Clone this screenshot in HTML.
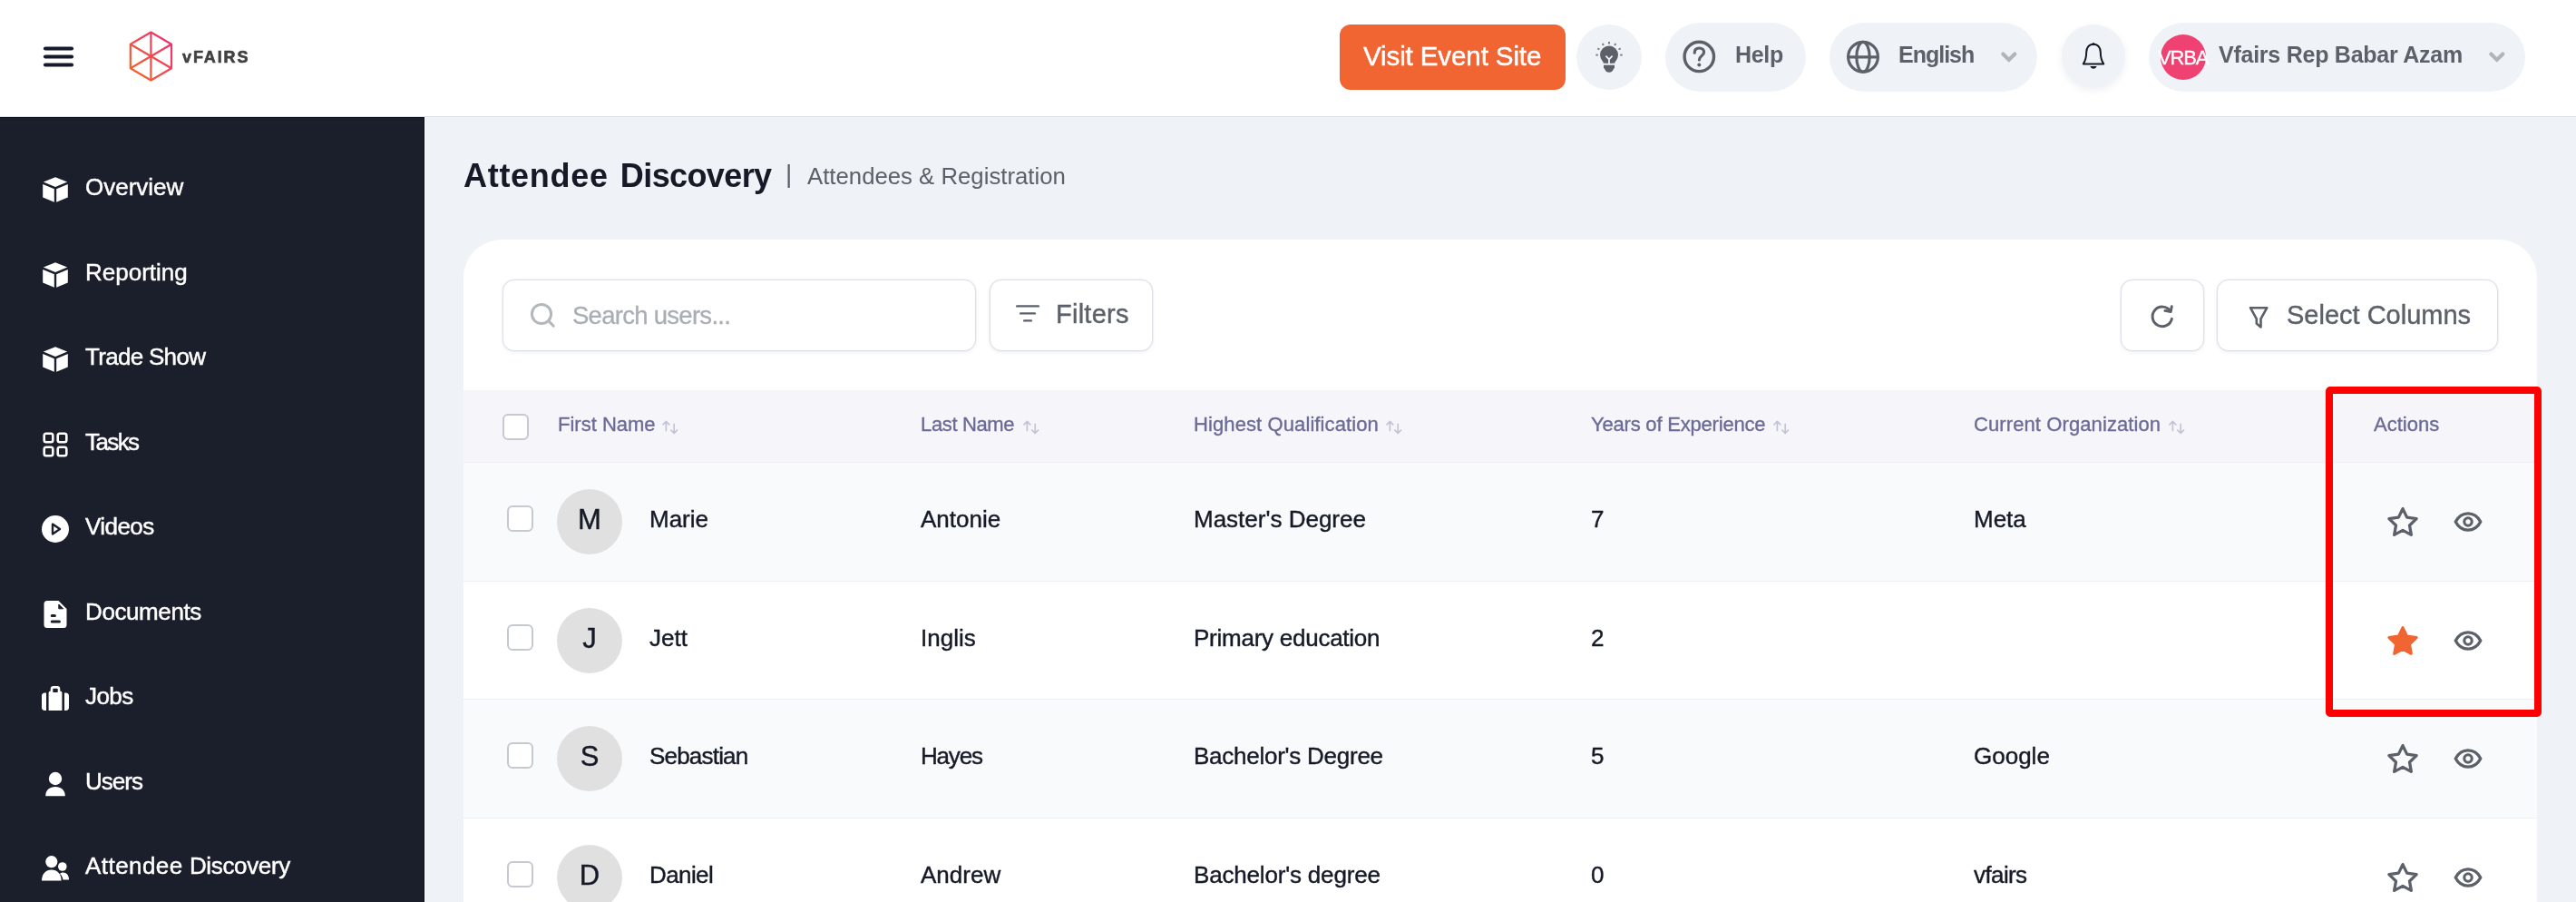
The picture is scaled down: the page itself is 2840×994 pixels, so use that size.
<!DOCTYPE html>
<html lang="en">
<head>
<meta charset="utf-8">
<title>Attendee Discovery</title>
<style>
*{box-sizing:border-box;margin:0;padding:0}
html,body{width:2840px;height:994px;overflow:hidden;background:#eff2f7}
body{position:relative;font-family:"Liberation Sans",sans-serif;color:#161a27}
.abs{position:absolute}
.t,.nav,.th,.td,.av{will-change:transform}
.t{position:absolute;white-space:nowrap;line-height:1}
/* header */
#header{position:absolute;left:0;top:0;width:2840px;height:129px;background:#fff;border-bottom:1px solid #dde1e7}
.pill{position:absolute;background:#eff2f7;border-radius:40px}
.hd{color:#5b6069;font-weight:bold;font-size:25px}
/* sidebar */
#sidebar{position:absolute;left:0;top:129px;width:468px;height:865px;background:#1b1e2b;box-shadow:inset -1px 0 0 #0f121e,inset 0 1px 0 #10131f,1px 0 0 #fbfcfe}
.nav{position:absolute;left:94px;color:#fff;font-size:26px;line-height:1;white-space:nowrap;-webkit-text-stroke:0.45px #fff}
.ni{position:absolute;left:46px;width:30px;height:30px}
/* content */
#card{position:absolute;left:511px;top:264px;width:2286px;height:760px;background:#fff;border-radius:42px 42px 0 0;overflow:hidden}
.btn{position:absolute;background:#fff;border:1px solid #dde1e7;border-radius:13px;box-shadow:0 0 0 .5px rgba(221,225,231,.6),0 2px 4px rgba(20,30,60,.05)}
.th{position:absolute;white-space:nowrap;line-height:1;font-size:22px;color:#6b6a96;top:26.6px;-webkit-text-stroke:0.35px #6b6a96}
.row{position:absolute;left:0;width:2286px;height:131px;box-shadow:inset 0 -1px 0 #edf0f4}
.row.alt{background:#f9fafc}
.td{position:absolute;white-space:nowrap;line-height:1;font-size:26px;color:#161a27;top:49.4px;-webkit-text-stroke:0.4px #161a27}
.cb{position:absolute;width:28.6px;height:28.6px;border:2px solid #c6c9d0;border-radius:6px;background:#fff}
.av{position:absolute;left:103px;top:29px;width:72px;height:72px;border-radius:50%;background:#e0e0e0;text-align:center;font-size:31px;line-height:67px;color:#161a27;-webkit-text-stroke:0.4px #161a27}
</style>
</head>
<body>

<!-- ================= HEADER ================= -->
<div id="header">
  <!-- hamburger -->
  <svg class="abs" style="left:46px;top:48px" width="38" height="30" viewBox="0 0 38 30">
    <g stroke="#151928" stroke-width="4.2" stroke-linecap="round">
      <line x1="4" y1="5.5" x2="33" y2="5.5"/><line x1="4" y1="14.5" x2="33" y2="14.5"/><line x1="4" y1="23.5" x2="33" y2="23.5"/>
    </g>
  </svg>
  <!-- logo -->
  <svg class="abs" style="left:140px;top:32px" width="54" height="60" viewBox="0 0 54 60">
    <defs><linearGradient id="lg" x1="0" y1="1" x2="1" y2="0"><stop offset="0" stop-color="#f26a21"/><stop offset="1" stop-color="#ee2a7b"/></linearGradient></defs>
    <g fill="none" stroke="url(#lg)" stroke-width="2.2" stroke-linejoin="round">
      <path d="M26.4 3.5 L49 16.8 L49 43.3 L26.4 56.5 L3.8 43.3 L3.8 16.8 Z"/>
      <path d="M26.4 3.5 L26.4 56.5 M3.8 16.8 L49 43.3 M49 16.8 L3.8 43.3"/>
    </g>
  </svg>
  <div class="t" style="left:200.5px;top:53.7px;font-size:18px;font-weight:bold;letter-spacing:1.9px;color:#414042;-webkit-text-stroke:0.6px #414042">vFAIRS</div>

  <!-- Visit Event Site -->
  <div class="abs" style="left:1477px;top:27px;width:249px;height:72px;background:#f16532;border-radius:12px"></div>
  <div class="t" id="visit" style="left:1503px;top:47px;font-size:29.5px;color:#fff;letter-spacing:-0.1px;-webkit-text-stroke:0.5px #fff">Visit Event Site</div>
  <!-- bulb -->
  <div class="pill" style="left:1738px;top:27px;width:72px;height:72px"></div>
  <svg class="abs" style="left:1756px;top:43px" width="36" height="40" viewBox="0 0 36 40">
    <g fill="#5b6069">
      <circle cx="18" cy="17.6" r="10"/>
      <path d="M11.6 22 L24.4 22 L24.4 26.8 L11.6 26.8 Z"/>
      <path d="M12 28.4 L24 28.4 L24 31.6 L21.2 35.8 Q18 37.6 14.8 35.8 L12 31.6 Z"/>
    </g>
    <rect x="9" y="26.8" width="18" height="1.6" fill="#eff2f7"/>
    <path d="M14.4 18.6 L18 22.4 L21.6 18.6 M18 22.4 L18 26.9" fill="none" stroke="#eff2f7" stroke-width="1.8"/>
    <g stroke="#5b6069" stroke-width="2" opacity=".8">
      <path d="M18.00 5.40 L18.00 3.00"/><path d="M24.10 7.03 L25.30 4.96"/><path d="M11.90 7.03 L10.70 4.96"/><path d="M28.57 11.50 L30.64 10.30"/><path d="M7.43 11.50 L5.36 10.30"/><path d="M30.20 17.60 L32.60 17.60"/><path d="M5.80 17.60 L3.40 17.60"/>
    </g>
  </svg>
  <!-- help -->
  <div class="pill" style="left:1836px;top:25px;width:155px;height:76px"></div>
  <svg class="abs" style="left:1853px;top:42px" width="40" height="40" viewBox="0 0 40 40">
    <circle cx="20.3" cy="20.4" r="16.2" fill="none" stroke="#5b6069" stroke-width="3.4"/>
    <path d="M15.2 16.2 C15.2 12.6 17.6 11 20.4 11 C23.4 11 25.6 12.8 25.6 15.6 C25.6 19.4 20.6 19.4 20.4 24" fill="none" stroke="#5b6069" stroke-width="3.2" stroke-linecap="round"/>
    <circle cx="20.3" cy="29.4" r="2" fill="#5b6069"/>
  </svg>
  <div class="t hd" id="help" style="left:1913px;top:47.8px;letter-spacing:-0.3px">Help</div>
  <!-- english -->
  <div class="pill" style="left:2017px;top:25px;width:229px;height:76px"></div>
  <svg class="abs" style="left:2034px;top:43px" width="40" height="40" viewBox="0 0 40 40">
    <g fill="none" stroke="#5b6069" stroke-width="3.2">
      <circle cx="20" cy="19.8" r="16.4"/>
      <ellipse cx="20" cy="19.8" rx="7.2" ry="16.4"/>
      <path d="M3.6 19.8 L36.4 19.8"/>
    </g>
  </svg>
  <div class="t hd" id="english" style="left:2093px;top:47.8px;letter-spacing:-1px">English</div>
  <svg class="abs" style="left:2202px;top:53px" width="26" height="20" viewBox="0 0 26 20">
    <path d="M6.3 6.6 L12.8 12.9 L19.3 6.6" fill="none" stroke="#b1b4ba" stroke-width="4.2" stroke-linecap="round" stroke-linejoin="miter"/>
  </svg>
  <!-- bell -->
  <div class="pill" style="left:2273px;top:27px;width:70px;height:70px;box-shadow:0 3px 8px rgba(30,40,70,.07)"></div>
  <svg class="abs" style="left:2292px;top:44px" width="32" height="36" viewBox="0 0 32 36">
    <path d="M16 4.8 C10.8 4.8 8.2 9 8.2 13.6 C8.2 19.2 6.8 23.6 4.8 26.4 L27.2 26.4 C25.2 23.6 23.8 19.2 23.8 13.6 C23.8 9 21.2 4.8 16 4.8 Z" fill="none" stroke="#161a27" stroke-width="2" stroke-linejoin="round"/>
    <circle cx="16" cy="4.5" r="1.5" fill="#161a27"/>
    <path d="M12.4 29 L19.6 29 C19 30.8 17.6 31.8 16 31.8 C14.4 31.8 13 30.8 12.4 29 Z" fill="#161a27"/>
  </svg>
  <!-- user -->
  <div class="pill" style="left:2369px;top:25px;width:415px;height:76px"></div>
  <div class="abs" style="left:2381.5px;top:38px;width:50px;height:50px;border-radius:50%;background:#ef4272"></div>
  <div class="t" id="vrba" style="left:2378.5px;top:52.5px;font-size:22px;color:#fff;letter-spacing:-1.2px;-webkit-text-stroke:0.3px #fff">VRBA</div>
  <div class="t hd" id="uname" style="left:2445.5px;top:48px;letter-spacing:-0.25px">Vfairs Rep Babar Azam</div>
  <svg class="abs" style="left:2740px;top:53px" width="26" height="20" viewBox="0 0 26 20">
    <path d="M6.3 6.6 L12.8 12.9 L19.3 6.6" fill="none" stroke="#b1b4ba" stroke-width="4.2" stroke-linecap="round" stroke-linejoin="miter"/>
  </svg>
</div>

<!-- ================= SIDEBAR ================= -->
<div id="sidebar">
  <svg class="ni" style="top:65.2px" viewBox="0 0 30 30"><g fill="#fff"><path d="M15 1.2 L28.2 6.6 L15 12 L1.8 6.6 Z"/><path d="M1.2 9 L13.8 14.2 L13.8 28.8 L1.2 23.4 Z"/><path d="M28.8 9 L16.2 14.2 L16.2 28.8 L28.8 23.4 Z"/></g></svg>
  <div class="nav" style="top:64.2px">Overview</div>
  <svg class="ni" style="top:158.7px" viewBox="0 0 30 30"><g fill="#fff"><path d="M15 1.2 L28.2 6.6 L15 12 L1.8 6.6 Z"/><path d="M1.2 9 L13.8 14.2 L13.8 28.8 L1.2 23.4 Z"/><path d="M28.8 9 L16.2 14.2 L16.2 28.8 L28.8 23.4 Z"/></g></svg>
  <div class="nav" style="top:157.7px">Reporting</div>
  <svg class="ni" style="top:252.2px" viewBox="0 0 30 30"><g fill="#fff"><path d="M15 1.2 L28.2 6.6 L15 12 L1.8 6.6 Z"/><path d="M1.2 9 L13.8 14.2 L13.8 28.8 L1.2 23.4 Z"/><path d="M28.8 9 L16.2 14.2 L16.2 28.8 L28.8 23.4 Z"/></g></svg>
  <div class="nav" style="top:251.2px;letter-spacing:-0.7px">Trade Show</div>
  <svg class="ni" style="top:345.7px" viewBox="0 0 30 30"><g fill="none" stroke="#fff" stroke-width="2.6"><rect x="2.7" y="2.7" width="9.6" height="9.6" rx="2.2"/><rect x="17.7" y="2.7" width="9.6" height="9.6" rx="2.2"/><rect x="2.7" y="17.7" width="9.6" height="9.6" rx="2.2"/><rect x="17.7" y="17.7" width="9.6" height="9.6" rx="2.2"/></g></svg>
  <div class="nav" style="top:344.7px;letter-spacing:-1.6px">Tasks</div>
  <svg class="ni" style="top:439.2px" viewBox="0 0 30 30"><circle cx="15" cy="15" r="15" fill="#fff"/><path d="M12 9.6 L20 15 L12 20.4 Z" fill="none" stroke="#1b1e2b" stroke-width="2.4" stroke-linejoin="round"/></svg>
  <div class="nav" style="top:438.2px;letter-spacing:-0.55px">Videos</div>
  <svg class="ni" style="top:532.7px" viewBox="0 0 30 30"><path d="M6 0 L18.5 0 L27.5 9 L27.5 26.5 Q27.5 30 24 30 L6 30 Q2.5 30 2.5 26.5 L2.5 3.5 Q2.5 0 6 0 Z" fill="#fff"/><path d="M18.8 4 L18.8 8.8 L23.6 8.8 Z" fill="#1b1e2b" stroke="#1b1e2b" stroke-width="1" stroke-linejoin="round"/><path d="M11.2 16.6 L14.4 16.6 M11.2 23 L19.4 23" stroke="#1b1e2b" stroke-width="3" stroke-linecap="round"/></svg>
  <div class="nav" style="top:531.7px;letter-spacing:-0.4px">Documents</div>
  <svg class="ni" style="top:626.2px" viewBox="0 0 30 30"><g fill="#fff"><path d="M7.6 8.6 Q7.6 6.4 10 6.4 L20 6.4 Q22.4 6.4 22.4 8.6 L22.4 28 L7.6 28 Z"/><path d="M5 8.4 L5 28 L3.4 28 Q0 28 0 24.6 L0 12 Q0 8.4 3.4 8.4 Z"/><path d="M25 8.4 L25 28 L26.6 28 Q30 28 30 24.6 L30 12 Q30 8.4 26.6 8.4 Z"/></g><path d="M11 7 L11 4.4 Q11 2.4 13 2.4 L17 2.4 Q19 2.4 19 4.4 L19 7" fill="none" stroke="#fff" stroke-width="2.6"/><rect x="12.4" y="6" width="5.2" height="2" fill="#1b1e2b"/></svg>
  <div class="nav" style="top:625.2px;letter-spacing:-0.55px">Jobs</div>
  <svg class="ni" style="top:719.7px" viewBox="0 0 30 30"><g fill="#fff"><circle cx="15" cy="9" r="7.2"/><path d="M4.2 28.2 C4.2 21.6 9 18 15 18 C21 18 25.8 21.6 25.8 28.2 Z"/></g></svg>
  <div class="nav" style="top:718.7px;letter-spacing:-1.0px">Users</div>
  <svg class="ni" style="top:813.2px" viewBox="0 0 30 30"><g fill="#fff"><circle cx="10.8" cy="7.6" r="6.6"/><path d="M0 28.6 C0 21 4.6 16.6 10.8 16.6 C17 16.6 21.6 21 21.6 28.6 Z"/><circle cx="22.8" cy="13" r="4.8"/><path d="M20 21 C21 20 22.2 19.6 23.4 19.6 C27.4 19.6 30 22.6 30 27.4 L23.4 27.4 C23.2 25 22 22.6 20 21 Z"/></g></svg>
  <div class="nav" style="top:812.2px"><span style="letter-spacing:.45px">Attendee</span> <span style="letter-spacing:-.35px">Discovery</span></div>
</div>

<!-- ================= CONTENT ================= -->
<div class="t" id="title" style="left:510.5px;top:175.6px;font-size:36px;font-weight:bold;color:#161a27;word-spacing:3.2px"><span style="letter-spacing:.7px">Attendee</span> <span style="letter-spacing:-.6px">Discovery</span></div>
<div class="t" style="left:866px;top:178px;font-size:28px;color:#5c6069">|</div>
<div class="t" id="subtitle" style="left:889.5px;top:182px;font-size:25.75px;color:#5c6069">Attendees &amp; Registration</div>

<div id="card">
  <!-- toolbar -->
  <div class="btn" style="left:43px;top:44px;width:521.5px;height:78.6px"></div>
  <svg class="abs" style="left:72px;top:68px" width="32" height="32" viewBox="0 0 32 32"><circle cx="14" cy="14" r="10.6" fill="none" stroke="#b3b7be" stroke-width="3"/><path d="M21.8 21.6 L27.2 27.2" stroke="#b3b7be" stroke-width="3" stroke-linecap="round"/></svg>
  <div class="t" id="search" style="left:120px;top:70.3px;font-size:27.5px;color:#a9adb5;letter-spacing:-0.72px;-webkit-text-stroke:0.3px #a9adb5">Search users...</div>
  <div class="btn" style="left:580px;top:44px;width:180px;height:79px"></div>
  <svg class="abs" style="left:606px;top:67.5px" width="32" height="26" viewBox="0 0 32 26"><g stroke="#5b6069" stroke-width="2.4" stroke-linecap="round"><path d="M4.2 5.4 L27.8 5.4"/><path d="M8.2 13.4 L23.8 13.4"/><path d="M12.2 21.4 L19.8 21.4"/></g></svg>
  <div class="t" id="filters" style="left:653px;top:68px;font-size:29px;color:#5b6069;letter-spacing:.25px;-webkit-text-stroke:0.4px #5b6069">Filters</div>
  <div class="btn" style="left:1827px;top:44px;width:92px;height:79px"></div>
  <svg class="abs" style="left:1857px;top:68px" width="32" height="32" viewBox="0 0 32 32"><path d="M26.4 19.3 A10.8 10.8 0 1 1 24.75 10.7" fill="none" stroke="#5b6069" stroke-width="2.9" stroke-linecap="round"/><path d="M18.9 10.4 L25.2 11.5 L26.3 5.7" fill="none" stroke="#5b6069" stroke-width="2.9" stroke-linecap="round" stroke-linejoin="round"/></svg>
  <div class="btn" style="left:1933px;top:44px;width:310px;height:79px"></div>
  <svg class="abs" style="left:1965px;top:70px" width="28" height="30" viewBox="0 0 28 30"><path d="M5 5.2 L23.3 5.2 L16.5 17.4 L16.5 26.4 L11.8 22.6 L11.8 17.4 Z" fill="none" stroke="#5b6069" stroke-width="2.6" stroke-linejoin="round"/></svg>
  <div class="t" id="selcol" style="left:2009.5px;top:69px;font-size:29px;color:#5b6069;-webkit-text-stroke:0.4px #5b6069">Select Columns</div>
  <!-- table header -->
  <div class="abs" id="thead" style="left:0;top:166px;width:2286px;height:80px;background:#f5f5fa;box-shadow:inset 0 -1px 0 #edeff4">
    <div class="cb" style="left:43px;top:26px"></div>
    <div class="th" style="left:103.5px">First Name</div><svg class="abs" style="left:218px;top:31px" width="20" height="20" viewBox="0 0 20 20"><g fill="none" stroke="#c3c4d6" stroke-width="1.7" stroke-linecap="round" stroke-linejoin="round"><path d="M5.4 13.4 L5.4 3.4 M2 6.8 L5.4 3.4 L8.8 6.8"/><path d="M14.2 6.4 L14.2 16.4 M10.8 13 L14.2 16.4 L17.6 13"/></g></svg>
    <div class="th" style="left:504px;letter-spacing:-0.35px">Last Name</div><svg class="abs" style="left:615.5px;top:31px" width="20" height="20" viewBox="0 0 20 20"><g fill="none" stroke="#c3c4d6" stroke-width="1.7" stroke-linecap="round" stroke-linejoin="round"><path d="M5.4 13.4 L5.4 3.4 M2 6.8 L5.4 3.4 L8.8 6.8"/><path d="M14.2 6.4 L14.2 16.4 M10.8 13 L14.2 16.4 L17.6 13"/></g></svg>
    <div class="th" style="left:805px;letter-spacing:0.1px">Highest Qualification</div><svg class="abs" style="left:1016.2px;top:31px" width="20" height="20" viewBox="0 0 20 20"><g fill="none" stroke="#c3c4d6" stroke-width="1.7" stroke-linecap="round" stroke-linejoin="round"><path d="M5.4 13.4 L5.4 3.4 M2 6.8 L5.4 3.4 L8.8 6.8"/><path d="M14.2 6.4 L14.2 16.4 M10.8 13 L14.2 16.4 L17.6 13"/></g></svg>
    <div class="th" style="left:1242.5px;letter-spacing:-0.2px">Years of Experience</div><svg class="abs" style="left:1443px;top:31px" width="20" height="20" viewBox="0 0 20 20"><g fill="none" stroke="#c3c4d6" stroke-width="1.7" stroke-linecap="round" stroke-linejoin="round"><path d="M5.4 13.4 L5.4 3.4 M2 6.8 L5.4 3.4 L8.8 6.8"/><path d="M14.2 6.4 L14.2 16.4 M10.8 13 L14.2 16.4 L17.6 13"/></g></svg>
    <div class="th" style="left:1665px;letter-spacing:0.1px">Current Organization</div><svg class="abs" style="left:1879.4px;top:31px" width="20" height="20" viewBox="0 0 20 20"><g fill="none" stroke="#c3c4d6" stroke-width="1.7" stroke-linecap="round" stroke-linejoin="round"><path d="M5.4 13.4 L5.4 3.4 M2 6.8 L5.4 3.4 L8.8 6.8"/><path d="M14.2 6.4 L14.2 16.4 M10.8 13 L14.2 16.4 L17.6 13"/></g></svg>
    <div class="th" style="left:2105.5px">Actions</div>
  </div>
  <div class="row alt" style="top:246px;height:131px">
    <div class="cb" style="left:48px;top:47.2px"></div>
    <div class="av">M</div>
    <div class="td" style="left:205px">Marie</div>
    <div class="td" style="left:504px">Antonie</div>
    <div class="td" style="left:805px">Master&#39;s Degree</div>
    <div class="td" style="left:1242.5px">7</div>
    <div class="td" style="left:1665px">Meta</div>
    <svg class="abs" style="left:2118px;top:45px" width="40" height="40" viewBox="0 0 40 40"><path d="M20.00 5.60 L24.64 15.11 L35.12 16.59 L27.51 23.94 L29.35 34.36 L20.00 29.40 L10.65 34.36 L12.49 23.94 L4.88 16.59 L15.36 15.11 Z" fill="none" stroke="#5b6069" stroke-width="3.3" stroke-linejoin="round"/></svg>
    <svg class="abs" style="left:2192px;top:49px" width="36" height="32" viewBox="0 0 36 32"><path d="M4.2 16 C7.8 9.2 12.4 6.8 18 6.8 C23.6 6.8 28.2 9.2 31.8 16 C28.2 22.8 23.6 25.2 18 25.2 C12.4 25.2 7.8 22.8 4.2 16 Z" fill="none" stroke="#5b6069" stroke-width="3.3" stroke-linejoin="round"/><circle cx="18" cy="16" r="4.2" fill="none" stroke="#5b6069" stroke-width="3.1"/></svg>
  </div>
  <div class="row" style="top:377px;height:130px">
    <div class="cb" style="left:48px;top:47.2px"></div>
    <div class="av">J</div>
    <div class="td" style="left:205px">Jett</div>
    <div class="td" style="left:504px">Inglis</div>
    <div class="td" style="left:805px;letter-spacing:-0.25px">Primary education</div>
    <div class="td" style="left:1242.5px">2</div>
    <div class="td" style="left:1665px"></div>
    <svg class="abs" style="left:2118px;top:45px" width="40" height="40" viewBox="0 0 40 40"><path d="M20.00 5.60 L24.64 15.11 L35.12 16.59 L27.51 23.94 L29.35 34.36 L20.00 29.40 L10.65 34.36 L12.49 23.94 L4.88 16.59 L15.36 15.11 Z" fill="#f16532" stroke="#f16532" stroke-width="3" stroke-linejoin="round"/></svg>
    <svg class="abs" style="left:2192px;top:49px" width="36" height="32" viewBox="0 0 36 32"><path d="M4.2 16 C7.8 9.2 12.4 6.8 18 6.8 C23.6 6.8 28.2 9.2 31.8 16 C28.2 22.8 23.6 25.2 18 25.2 C12.4 25.2 7.8 22.8 4.2 16 Z" fill="none" stroke="#5b6069" stroke-width="3.3" stroke-linejoin="round"/><circle cx="18" cy="16" r="4.2" fill="none" stroke="#5b6069" stroke-width="3.1"/></svg>
  </div>
  <div class="row alt" style="top:507px;height:131px">
    <div class="cb" style="left:48px;top:47.2px"></div>
    <div class="av">S</div>
    <div class="td" style="left:205px;letter-spacing:-0.8px">Sebastian</div>
    <div class="td" style="left:504px;letter-spacing:-1.2px">Hayes</div>
    <div class="td" style="left:805px;letter-spacing:-0.25px">Bachelor&#39;s Degree</div>
    <div class="td" style="left:1242.5px">5</div>
    <div class="td" style="left:1665px">Google</div>
    <svg class="abs" style="left:2118px;top:45px" width="40" height="40" viewBox="0 0 40 40"><path d="M20.00 5.60 L24.64 15.11 L35.12 16.59 L27.51 23.94 L29.35 34.36 L20.00 29.40 L10.65 34.36 L12.49 23.94 L4.88 16.59 L15.36 15.11 Z" fill="none" stroke="#5b6069" stroke-width="3.3" stroke-linejoin="round"/></svg>
    <svg class="abs" style="left:2192px;top:49px" width="36" height="32" viewBox="0 0 36 32"><path d="M4.2 16 C7.8 9.2 12.4 6.8 18 6.8 C23.6 6.8 28.2 9.2 31.8 16 C28.2 22.8 23.6 25.2 18 25.2 C12.4 25.2 7.8 22.8 4.2 16 Z" fill="none" stroke="#5b6069" stroke-width="3.3" stroke-linejoin="round"/><circle cx="18" cy="16" r="4.2" fill="none" stroke="#5b6069" stroke-width="3.1"/></svg>
  </div>
  <div class="row" style="top:638px;height:131px">
    <div class="cb" style="left:48px;top:47.2px"></div>
    <div class="av">D</div>
    <div class="td" style="left:205px;letter-spacing:-0.6px">Daniel</div>
    <div class="td" style="left:504px">Andrew</div>
    <div class="td" style="left:805px;letter-spacing:-0.18px">Bachelor&#39;s degree</div>
    <div class="td" style="left:1242.5px">0</div>
    <div class="td" style="left:1665px;letter-spacing:-0.6px">vfairs</div>
    <svg class="abs" style="left:2118px;top:45px" width="40" height="40" viewBox="0 0 40 40"><path d="M20.00 5.60 L24.64 15.11 L35.12 16.59 L27.51 23.94 L29.35 34.36 L20.00 29.40 L10.65 34.36 L12.49 23.94 L4.88 16.59 L15.36 15.11 Z" fill="none" stroke="#5b6069" stroke-width="3.3" stroke-linejoin="round"/></svg>
    <svg class="abs" style="left:2192px;top:49px" width="36" height="32" viewBox="0 0 36 32"><path d="M4.2 16 C7.8 9.2 12.4 6.8 18 6.8 C23.6 6.8 28.2 9.2 31.8 16 C28.2 22.8 23.6 25.2 18 25.2 C12.4 25.2 7.8 22.8 4.2 16 Z" fill="none" stroke="#5b6069" stroke-width="3.3" stroke-linejoin="round"/><circle cx="18" cy="16" r="4.2" fill="none" stroke="#5b6069" stroke-width="3.1"/></svg>
  </div>
</div>

<!-- highlight annotation -->
<div class="abs" style="left:2564px;top:426px;width:238px;height:364px;border:8px solid #fe0000;border-radius:5px"></div>

<script>
(function(){var w=window.innerWidth||2840;if(Math.abs(w-2840)>28){document.documentElement.style.zoom=(w/2840);}})();
</script>
</body>
</html>
